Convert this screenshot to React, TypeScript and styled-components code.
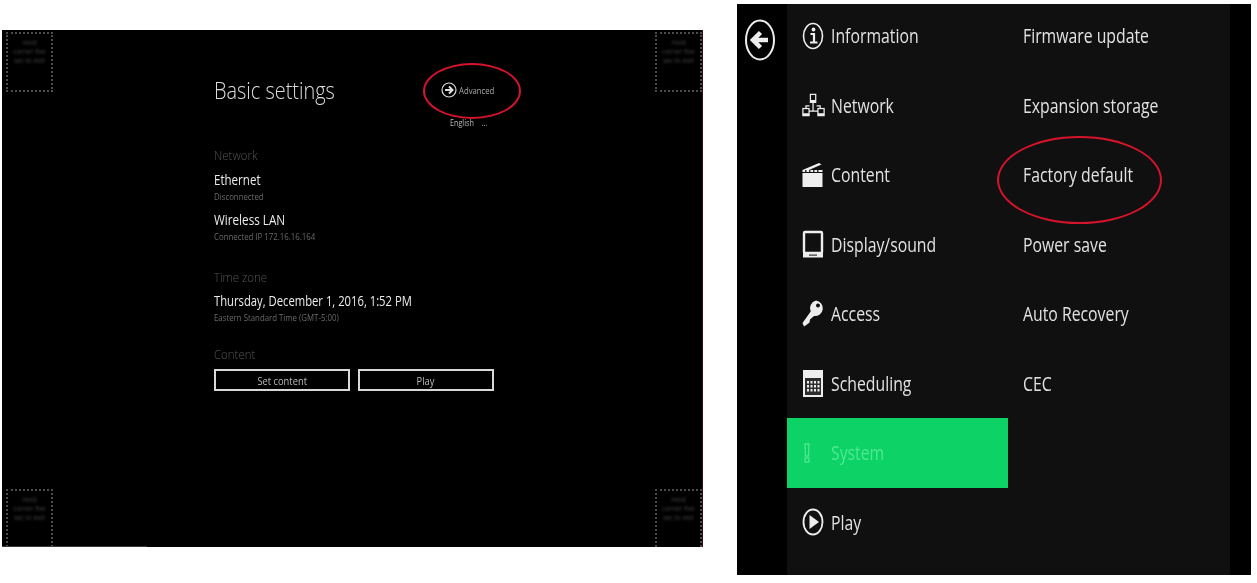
import React from "react";
import styled, { createGlobalStyle } from "styled-components";

const Global = createGlobalStyle`
  html, body { margin: 0; background: #fff; }
  * { box-sizing: border-box; }
  body { font-family: "Open Sans", "Noto Sans", sans-serif; }
`;
const Page = styled.div`
  width: 1257px; height: 583px; overflow: hidden; display: flex; align-items: flex-start;
  padding: 4px 6px 0 2px;
`;
const Screen = styled.section`
  position: relative; flex: none; width: 701px; height: 517px; margin-top: 26px; background: #000;
  border-right: 1px solid #3a0a1c; padding: 44px 0 0 212px; color: #e8e8e8;
  filter: blur(0.45px);
`;
const Marker = styled.div<{ $v: "top" | "bottom"; $h: "left" | "right" }>`
  position: absolute; width: 47px; border: 2px dotted #4c4c4c;
  height: ${(p) => (p.$v === "top" ? 60 : 58)}px;
  ${(p) => (p.$v === "top" ? "top: 2px;" : "bottom: 0; border-bottom: none;")}
  ${(p) => (p.$h === "left" ? "left: 4px;" : "right: 0;")}
  padding-top: 4px; text-align: center; font-size: 6.5px; line-height: 9px; color: #444;
`;
const MarkerLine = styled.div`filter: blur(0.9px); white-space: nowrap;`;
const Header = styled.div`display: flex; align-items: flex-start;`;
const Title = styled.h1`
  margin: 0; width: 228px; font-size: 24px; line-height: 32px; font-weight: 300; color: #dcdcdc;
  white-space: nowrap; transform: scaleX(.83); transform-origin: left center;
`;
const AdvancedCol = styled.div`display: flex; flex-direction: column; padding-top: 8px;`;
const Advanced = styled.div`display: flex; align-items: center; gap: 2px; height: 16px; color: #aaa; margin-left: -1px;`;
const AdvancedText = styled.span`font-size: 9px; transform: scaleX(.86); transform-origin: left center;`;
const Lang = styled.div`
  font-size: 8.5px; line-height: 12px; color: #bbb; margin-top: 19px; margin-left: 8px; word-spacing: 7px;
  white-space: nowrap; transform: scaleX(.85); transform-origin: left center;
`;
const Section = styled.div`margin-top: 18px;`;
const Label = styled.div<{ $gap: number }>`
  font-size: 13.5px; line-height: 16px; font-weight: 300; color: #565656; margin-top: ${(p) => p.$gap}px;
  transform: scaleX(.85); transform-origin: left center;
`;
const Item = styled.div<{ $gap?: number; $squeeze?: number }>`
  font-size: 15px; line-height: 18px; font-weight: 400; color: #ededed; margin-top: ${(p) => p.$gap ?? 7}px;
  white-space: nowrap; transform: scaleX(${(p) => p.$squeeze ?? 0.77}); transform-origin: left center;
`;
const Sub = styled.div`
  font-size: 9px; line-height: 10px; color: #6a6a6a; margin-top: 4px;
  white-space: nowrap; transform: scaleX(.87); transform-origin: left center;
`;
const Buttons = styled.div`display: flex; gap: 8px; margin-top: 7px;`;
const Btn = styled.button`
  width: 136px; height: 22px; background: #000; border: 2px solid #d8d8d8; padding: 0; color: #bbb;
  font: 400 11px "Open Sans", sans-serif;
`;
const BtnText = styled.span`display: inline-block; transform: scaleX(.85);`;
const Ring = styled.div<{ $t: number; $l: number; $w: number; $h: number }>`
  position: absolute; top: ${(p) => p.$t}px; left: ${(p) => p.$l}px; width: ${(p) => p.$w}px; height: ${(p) => p.$h}px;
  border: 2.5px solid #d5142c; border-radius: 50%; pointer-events: none;
`;
const Scrollbar = styled.div`position: absolute; left: 0; bottom: 0; width: 145px; height: 1.5px; background: #3a3a3a;`;

const Panel = styled.section`
  position: relative; flex: none; width: 514px; height: 571px; margin-left: 34px; background: #000; display: flex;
  filter: blur(0.45px);
`;
const Rail = styled.div`flex: none; width: 50px; padding: 14px 0 0 7px; color: #eee;`;
const Body = styled.div`flex: none; width: 443px; background: #111010; display: flex; overflow: hidden;`;
const Menu = styled.div`flex: none; width: 221px; display: flex; flex-direction: column; margin-top: -3px;`;
const Row = styled.div<{ $active?: boolean }>`
  flex: none; height: 69.5px; display: flex; align-items: center; padding-left: 15px; gap: 6px;
  font-size: 20px; font-weight: 400; color: ${(p) => (p.$active ? "#4fe890" : "#e2e2e2")};
  background: ${(p) => (p.$active ? "#0dd266" : "transparent")};
`;
const Ico = styled.span`width: 23px; height: 28px; flex: none; display: flex; align-items: center; justify-content: flex-start;`;
const RowText = styled.span`white-space: nowrap; transform: scaleX(.79); transform-origin: left center;`;
const Sublist = styled.div`flex: 1; padding-left: 15px; margin-top: -3px;`;
const SubRow = styled.div`height: 69.5px; display: flex; align-items: center; font-size: 20px; font-weight: 400; color: #e2e2e2;`;

const Back = () => (
  <svg width="32" height="44" viewBox="0 0 32 44" fill="none" stroke="#eee">
    <ellipse cx="16" cy="22" rx="14" ry="19.5" strokeWidth="2" />
    <path d="M24 22H10M16.500 14.500 9 22l7.500 7.500" strokeWidth="4.5" />
  </svg>
);
const Forward = () => (
  <svg width="16" height="16" viewBox="0 0 16 16" fill="none" stroke="#ddd">
    <circle cx="8" cy="8" r="7" strokeWidth="1.2" />
    <path d="M4 8h7M8 4.500 11.500 8 8 11.500" strokeWidth="2" />
  </svg>
);
const Info = () => (
  <svg width="22" height="28" viewBox="0 0 22 28" fill="none" stroke="#eee">
    <ellipse cx="11" cy="14" rx="9.500" ry="12.500" strokeWidth="1.6" />
    <path d="M8.500 12H12v8.500M8 20.500h7.500" strokeWidth="2.200" />
    <circle cx="11.500" cy="7.500" r="1.900" fill="#eee" stroke="none" />
  </svg>
);
const Net = () => (
  <svg width="26" height="28" viewBox="0 0 26 28" fill="none" stroke="#eee" strokeWidth="1.4">
    <rect x="9.500" y="2" width="6" height="9" />
    <rect x="1" y="18" width="7" height="8" />
    <rect x="18" y="18" width="7" height="8" />
    <path d="M12.500 11v10M8 21h10M4.500 18v-3h4M20.500 18v-3h-4" />
    <path d="M9.500 9.500h6M1 24.500h7M18 24.500h7" strokeWidth="2.500" />
  </svg>
);
const Clap = () => (
  <svg width="21" height="26" viewBox="0 0 21 26" fill="#eee">
    <rect x="0.500" y="11" width="20" height="14" />
    <path d="M.5 10V8L17 1l2.500 1.500L7 8h13.500v2z" />
    <path d="M3 8h1.500v2H3zM7 8h1.500v2H7zM11 8h1.500v2H11zM15 8h1.500v2H15z" fill="#333" />
  </svg>
);
const Display = () => (
  <svg width="22" height="28" viewBox="0 0 22 28" fill="none" stroke="#eee">
    <rect x="2" y="2" width="18" height="21" rx="1" strokeWidth="2.400" />
    <rect x="1" y="23" width="20" height="4.500" fill="#eee" stroke="none" />
    <rect x="7" y="24.500" width="8" height="1.200" fill="#333" stroke="none" />
  </svg>
);
const Key = () => (
  <svg width="22" height="28" viewBox="0 0 22 28" fill="#eee">
    <path d="M14 .5A7.800 7.800 0 1 1 12 16l-4 3.500-.5 3-2.500 2-3 2L.5 23l8.200-11.500A8 8 0 0 1 14 .5z" />
    <circle cx="16" cy="5.500" r="2" fill="#111010" />
  </svg>
);
const Cal = () => (
  <svg width="22" height="28" viewBox="0 0 22 28">
    <rect x="1" y="1" width="20" height="27" fill="#eee" />
    <rect x="3" y="9" width="16" height="17" fill="#2c2c2c" />
    <g fill="#eee">
      {[12, 16, 20].map((y) => [5, 8.500, 12, 15.500].map((x) => <rect key={`${x}-${y}`} x={x} y={y} width="2" height="2.500" />))}
    </g>
  </svg>
);
const Warn = () => (
  <svg width="11" height="20" viewBox="0 0 11 20" fill="none" stroke="#4fe890" strokeWidth="1.300">
    <path d="M3 1h4l-.5 12h-3z" />
    <rect x="3" y="15" width="4" height="4" />
  </svg>
);
const PlayI = () => (
  <svg width="22" height="28" viewBox="0 0 22 28" fill="none" stroke="#eee">
    <ellipse cx="11" cy="14" rx="9.500" ry="12.500" strokeWidth="1.800" />
    <path d="M7.500 7 17 14l-9.500 7z" fill="#eee" stroke="none" />
  </svg>
);

const menu: [string, React.ReactNode][] = [
  ["Information", <Info />], ["Network", <Net />], ["Content", <Clap />], ["Display/sound", <Display />],
  ["Access", <Key />], ["Scheduling", <Cal />], ["System", <Warn />], ["Play", <PlayI />],
];
const subs = ["Firmware update", "Expansion storage", "Factory default", "Power save", "Auto Recovery", "CEC"];

const markerText = ["Hold", "corner five", "sec to exit"];
const markers: { v: "top" | "bottom"; h: "left" | "right" }[] = [
  { v: "top", h: "left" },
  { v: "top", h: "right" },
  { v: "bottom", h: "left" },
  { v: "bottom", h: "right" },
];

export default function App() {
  return (
    <>
      <Global />
      <Page>
        <Screen>
          {markers.map((m, i) => (
            <Marker key={i} $v={m.v} $h={m.h}>{markerText.map((x) => <MarkerLine key={x}>{x}</MarkerLine>)}</Marker>
          ))}
          <Header>
            <Title>Basic settings</Title>
            <AdvancedCol>
              <Advanced><Forward /><AdvancedText>Advanced</AdvancedText></Advanced>
              <Lang>English ...</Lang>
            </AdvancedCol>
          </Header>
          <Section>
            <Label $gap={0}>Network</Label>
            <Item>Ethernet</Item>
            <Sub>Disconnected</Sub>
            <Item $gap={8} $squeeze={0.78}>Wireless LAN</Item>
            <Sub>Connected IP 172.16.16.164</Sub>
            <Label $gap={27}>Time zone</Label>
            <Item $gap={6} $squeeze={0.75}>Thursday, December 1, 2016, 1:52 PM</Item>
            <Sub>Eastern Standard Time (GMT-5:00)</Sub>
            <Label $gap={23}>Content</Label>
            <Buttons>
              <Btn><BtnText>Set content</BtnText></Btn>
              <Btn><BtnText>Play</BtnText></Btn>
            </Buttons>
          </Section>
          <Ring $t={33} $l={421} $w={98} $h={56} />
          <Scrollbar />
        </Screen>
        <Panel>
          <Rail><Back /></Rail>
          <Body>
            <Menu>
              {menu.map(([label, icon]) => (
                <Row key={label} $active={label === "System"}><Ico>{icon}</Ico><RowText>{label}</RowText></Row>
              ))}
            </Menu>
            <Sublist>
              {subs.map((s) => <SubRow key={s}><RowText>{s}</RowText></SubRow>)}
            </Sublist>
          </Body>
          <Ring $t={132} $l={260} $w={165} $h={88} />
        </Panel>
      </Page>
    </>
  );
}
